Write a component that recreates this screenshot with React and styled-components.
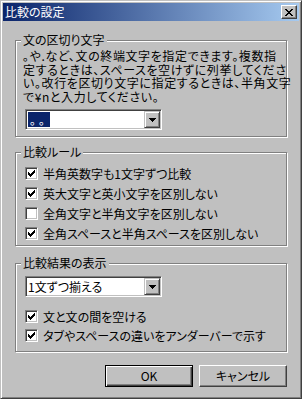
import React from 'react';
import styled, { createGlobalStyle } from 'styled-components';

const Global = createGlobalStyle`
  html, body { margin: 0; padding: 0; background: #c0c0c0; }
  body { font-family: "Noto Sans CJK JP", "Noto Sans", sans-serif; font-size: 12px; }
`;

const FONT = `"Noto Sans CJK JP", "Noto Sans", sans-serif`;

const Window = styled.div`
  width: 302px;
  height: 399px;
  box-sizing: border-box;
  background: #c0c0c0;
  border: 1px solid;
  border-color: #c0c0c0 #404040 #404040 #c0c0c0;
  box-shadow: inset 1px 1px #fff, inset -1px -1px #808080;
  padding: 2px;
  display: flex;
  flex-direction: column;
  font-family: ${FONT};
  font-size: 12px;
  color: #000;
  font-feature-settings: "palt";
`;

const TitleBar = styled.div`
  height: 18px;
  flex: none;
  display: flex;
  align-items: center;
  justify-content: space-between;
  padding: 0 2px 0 2px;
  background: linear-gradient(90deg, #0a246a 0%, #a6caf0 100%);
`;

const Title = styled.span`
  color: #fff;
  font-size: 12px;
  line-height: 18px;
  white-space: nowrap;
`;

const CloseButton = styled.div`
  width: 16px;
  height: 14px;
  box-sizing: border-box;
  background: #c0c0c0;
  border: 1px solid;
  border-color: #fff #404040 #404040 #fff;
  box-shadow: inset -1px -1px #808080;
  display: flex;
  align-items: center;
  justify-content: center;
`;

const Body = styled.div`
  flex: 1;
  display: flex;
  flex-direction: column;
  padding: 19px 12px 0 12px;
`;

const Group = styled.div`
  position: relative;
  border: 1px solid #808080;
  box-shadow: inset 1px 1px #fff, 1px 1px #fff;
  margin-top: ${p => p.$mt || 0}px;
  padding: ${p => p.$pt || 0}px 0 ${p => p.$pb || 0}px 7px;
`;

const Legend = styled.span`
  position: absolute;
  top: -8px;
  left: 5px;
  padding: 0 2px;
  background: #c0c0c0;
  line-height: 14px;
  white-space: nowrap;
`;

const Paragraph = styled.p`
  margin: 0;
  line-height: 13.5px;
  letter-spacing: 0.6px;
  white-space: nowrap;
`;

const Combo = styled.div`
  display: flex;
  width: 137px;
  height: 21px;
  box-sizing: border-box;
  margin: ${p => p.$mt || 0}px 0 0 2px;
  border: 1px solid;
  border-color: #808080 #fff #fff #808080;
  box-shadow: inset 1px 1px #404040, inset -1px -1px #c0c0c0;
  background: #fff;
  padding: 1px;
`;

const ComboText = styled.div`
  flex: 1;
  display: flex;
  align-items: center;
  padding-left: 1px;
  line-height: 15px;
  white-space: nowrap;
`;

const Selected = styled.span`
  background: #0a246a;
  color: #fff;
  padding: 0 2px;
  letter-spacing: 3px;
`;

const DropButton = styled.div`
  width: 16px;
  flex: none;
  box-sizing: border-box;
  background: #c0c0c0;
  border: 1px solid;
  border-color: #c0c0c0 #404040 #404040 #c0c0c0;
  box-shadow: inset 1px 1px #fff, inset -1px -1px #808080;
  display: flex;
  align-items: center;
  justify-content: center;
`;

const CheckRow = styled.div`
  display: flex;
  align-items: center;
  gap: 5px;
  height: ${p => p.$h || 20}px;
  margin-left: 2px;
  margin-top: ${p => p.$mt || 0}px;
  white-space: nowrap;
`;

const Box = styled.div`
  width: 13px;
  height: 13px;
  flex: none;
  box-sizing: border-box;
  border: 1px solid;
  border-color: #808080 #fff #fff #808080;
  box-shadow: inset 1px 1px #404040, inset -1px -1px #c0c0c0;
  background: #fff;
  display: flex;
  align-items: center;
  justify-content: center;
`;

const ButtonRow = styled.div`
  display: flex;
  justify-content: flex-end;
  gap: 6px;
  margin-top: 13px;
`;

const Button = styled.div`
  width: 88px;
  height: 22px;
  box-sizing: border-box;
  background: #c0c0c0;
  display: flex;
  align-items: center;
  justify-content: center;
  border: 1px solid;
  border-color: ${p => (p.$default ? '#000' : '#fff #404040 #404040 #fff')};
  box-shadow: ${p =>
    p.$default
      ? 'inset 1px 1px #fff, inset -1px -1px #404040, inset -2px -2px #808080'
      : 'inset -1px -1px #808080'};
  line-height: 14px;
`;

const Check = () => (
  <svg width="7" height="7" viewBox="0 0 7 7" shapeRendering="crispEdges">
    <path
      d="M6 0h1v1h-1zM5 1h2v1h-2zM0 2h1v1h-1zM4 2h3v1h-3zM0 3h2v1h-2zM3 3h3v1h-3zM0 4h5v1h-5zM1 5h3v1h-3zM2 6h1v1h-1z"
      fill="#000"
    />
  </svg>
);

const CheckBox = ({ checked, label, h, mt }) => (
  <CheckRow $h={h} $mt={mt}>
    <Box>{checked && <Check />}</Box>
    <span>{label}</span>
  </CheckRow>
);

const Arrow = () => (
  <svg width="7" height="4" viewBox="0 0 7 4" shapeRendering="crispEdges">
    <path d="M0 0h7v1h-7zM1 1h5v1h-5zM2 2h3v1h-3zM3 3h1v1h-1z" fill="#000" />
  </svg>
);

const CloseX = () => (
  <svg width="8" height="7" viewBox="0 0 8 7" shapeRendering="crispEdges">
    <path
      d="M0 0h2v1h-2zM6 0h2v1h-2zM1 1h2v1h-2zM5 1h2v1h-2zM2 2h4v1h-4zM3 3h2v1h-2zM2 4h4v1h-4zM1 5h2v1h-2zM5 5h2v1h-2zM0 6h2v1h-2zM6 6h2v1h-2z"
      fill="#000"
    />
  </svg>
);

export default function App() {
  return (
    <>
      <Global />
      <Window>
        <TitleBar>
          <Title>比較の設定</Title>
          <CloseButton>
            <CloseX />
          </CloseButton>
        </TitleBar>
        <Body>
          <Group $pt={8} $pb={6}>
            <Legend>文の区切り文字</Legend>
            <Paragraph>
              ｡や.など、文の終端文字を指定できます。複数指
              <br />
              定するときは、スペースを空けずに列挙してくださ
              <br />
              い。改行を区切り文字に指定するときは、半角文字
              <br />
              で¥nと入力してください。
            </Paragraph>
            <Combo $mt={6}>
              <ComboText>
                <Selected>｡｡</Selected>
              </ComboText>
              <DropButton>
                <Arrow />
              </DropButton>
            </Combo>
          </Group>
          <Group $mt={15} $pt={10} $pb={2}>
            <Legend>比較ルール</Legend>
            <CheckBox checked label="半角英数字も1文字ずつ比較" />
            <CheckBox checked label="英大文字と英小文字を区別しない" />
            <CheckBox label="全角文字と半角文字を区別しない" />
            <CheckBox checked label="全角スペースと半角スペースを区別しない" />
          </Group>
          <Group $mt={17} $pt={12} $pb={6}>
            <Legend>比較結果の表示</Legend>
            <Combo>
              <ComboText>1文ずつ揃える</ComboText>
              <DropButton>
                <Arrow />
              </DropButton>
            </Combo>
            <CheckBox checked h={19} mt={10} label="文と文の間を空ける" />
            <CheckBox checked h={19} label="タブやスペースの違いをアンダーバーで示す" />
          </Group>
          <ButtonRow>
            <Button $default>OK</Button>
            <Button>キャンセル</Button>
          </ButtonRow>
        </Body>
      </Window>
    </>
  );
}
